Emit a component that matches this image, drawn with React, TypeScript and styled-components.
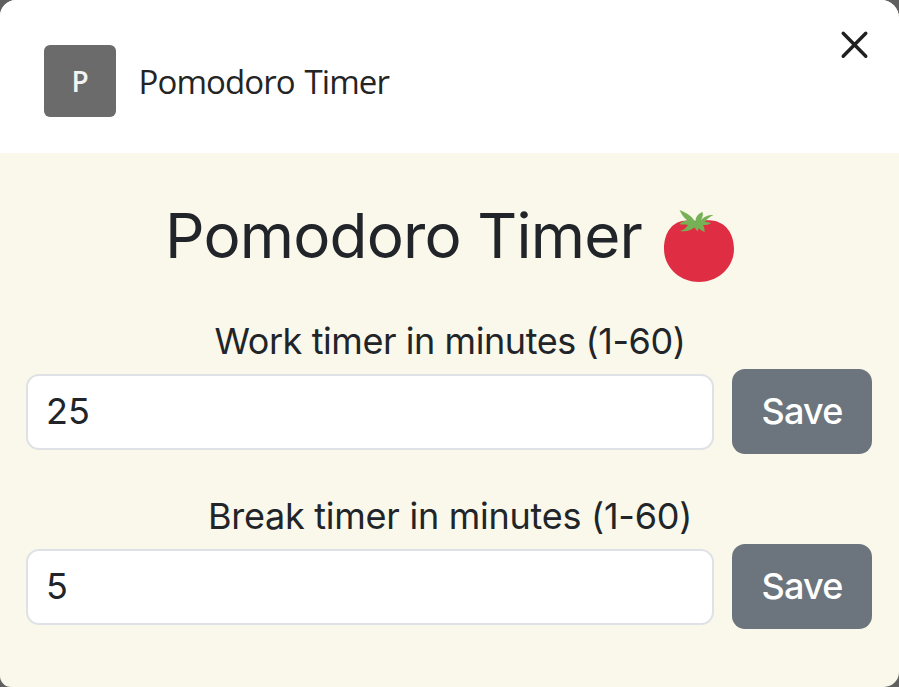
import React from "react";
import styled, { createGlobalStyle } from "styled-components";

const GlobalStyle = createGlobalStyle`
  * { box-sizing: border-box; }
  body { margin: 0; background: #606060; overflow: hidden; }
`;

const Dialog = styled.main`
  width: 899px;
  height: 687px;
  overflow: hidden;
  background: #faf8ea;
  border-radius: 16px 18px 15px 11px;
  color: #212529;
  font-family: Inter, "Liberation Sans", sans-serif;
`;

const Header = styled.header`
  display: flex;
  align-items: flex-start;
  height: 153px;
  padding: 45px 30px 0 44px;
  background: #fff;
`;

const Avatar = styled.div`
  display: flex;
  align-items: center;
  justify-content: center;
  width: 72px;
  height: 72px;
  border-radius: 6px;
  background: #6b6b6b;
  color: #f3f3f3;
  font: 600 28px/72px "Open Sans", "Noto Sans", sans-serif;
`;

const AppName = styled.div`
  margin-left: 22.5px;
  color: #242424;
  font: 400 33px/74px "Open Sans", "Noto Sans", sans-serif;
  letter-spacing: -0.9px;
  word-spacing: 2px;
  white-space: nowrap;
`;

const CloseButton = styled.button`
  display: flex;
  margin: -15px 0 0 auto;
  padding: 0;
  border: 0;
  background: none;
`;

const Title = styled.h1`
  display: flex;
  justify-content: flex-start;
  height: 168px;
  margin: 0;
  padding: 46px 0 0 165px;
  font-size: 62px;
  font-weight: 400;
  line-height: 74px;
  letter-spacing: -0.85px;
  white-space: nowrap;
`;

const TitleText = styled.span`
  width: 497px;
`;

const TomatoIcon = styled.svg`
  width: 72px;
  height: 74px;
  margin-top: 10px;
`;

const TimerForm = styled.form`
  display: grid;
  grid-template-columns: 688px 140px;
  column-gap: 18px;
  align-items: center;
  height: 175px;
  padding: 0 26px;
  grid-template-rows: 48px 85px;
`;

const Label = styled.label<{ $tracking: number }>`
  grid-column: 1 / -1;
  align-self: start;
  padding-left: 2px;
  text-align: center;
  font-size: 36px;
  line-height: 40px;
  letter-spacing: ${({ $tracking }) => $tracking}px;
  white-space: nowrap;
`;

const MinutesInput = styled.input`
  width: 100%;
  height: 76px;
  padding: 0 18px 2px;
  border: 2px solid #dee2e6;
  border-radius: 13px;
  outline: 0;
  background: #fff;
  color: #212529;
  font: 400 36px/54px Inter, "Liberation Sans", sans-serif;
`;

const SaveButton = styled.button`
  height: 85px;
  padding: 0 0 2px;
  border: 0;
  border-radius: 13px;
  background: #6c757d;
  color: #fff;
  font: 500 36px/54px Inter, "Liberation Sans", sans-serif;
  letter-spacing: -0.8px;
`;

const timers = [
  { id: "work", label: "Work timer in minutes (1-60)", value: "25", tracking: -0.43 },
  { id: "break", label: "Break timer in minutes (1-60)", value: "5", tracking: -0.26 },
];

export default function App() {
  return (
    <>
      <GlobalStyle />
      <Dialog>
        <Header>
          <Avatar>P</Avatar>
          <AppName>Pomodoro Timer</AppName>
          <CloseButton aria-label="Close">
            <svg width="29" height="30" viewBox="0 0 29 30" stroke="#202020" strokeWidth="3.4" strokeLinecap="round">
              <path d="M3.2 3.2 25.8 26.3M25.8 3.2 3.2 26.3" />
            </svg>
          </CloseButton>
        </Header>
        <Title>
          <TitleText>Pomodoro Timer</TitleText>
          <TomatoIcon viewBox="0 0 72 74" aria-label="Tomato">
            <path fill="#df2e44" d="M72 40C72 58 56.500 73 37 73S2 58 2 40C2 23 11 11.500 25 11.500c5 0 8 .5 12 .5s8-1 12.500-.5C63 12.500 72 24 72 40Z" />
            <path fill="#76b255" d="M17.500 1c8 3 13 7 16 12 0-5 2-8 7-10 1 3 0 5-1.500 8 3-3 6-5 12.500-5-4 2-7 4-8.500 7 2 0 4 0 6 1-2 2-5 2-8 2 1 2 2 4 1.500 7-3-1-5-3-5.500-4l-1.500 3.500-3-4c-4 3-8 4.500-14.500 3.500 4-1 6-3 8-6-3-1-6 0-8.500-1 3-3 5-3.500 8-3.500-4-3-6-6-8-10.500Z" />
          </TomatoIcon>
        </Title>
        {timers.map(({ id, label, value, tracking }) => (
          <TimerForm key={id} onSubmit={(event) => event.preventDefault()}>
            <Label htmlFor={id} $tracking={tracking}>{label}</Label>
            <MinutesInput id={id} defaultValue={value} inputMode="numeric" />
            <SaveButton>Save</SaveButton>
          </TimerForm>
        ))}
      </Dialog>
    </>
  );
}
